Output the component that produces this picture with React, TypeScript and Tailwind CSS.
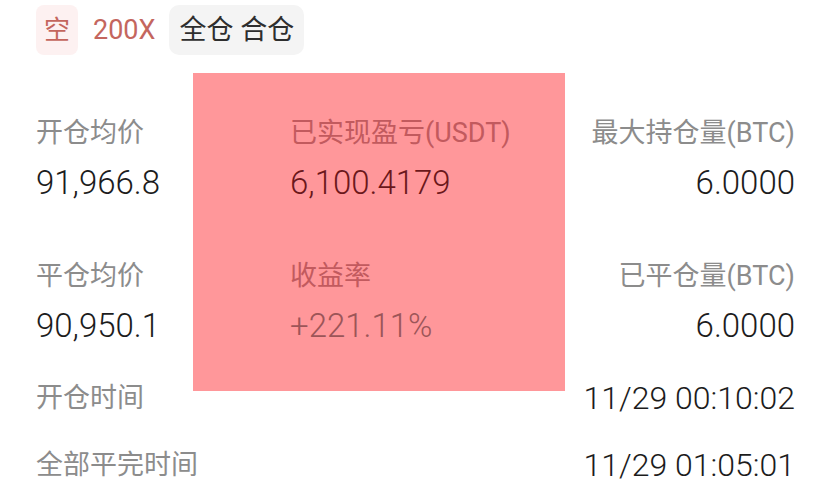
import React from 'react';

const num = { fontFamily: 'Roboto, "Noto Sans CJK SC", sans-serif' };
const cjk = { fontFamily: 'Roboto, "Noto Sans CJK SC", sans-serif' };

function Cell({
  label,
  value,
  align = 'left',
  labelClass = 'text-[#8c8c8c]',
  valueClass = 'text-[#1c1c1c]',
}: {
  label: string;
  value: string;
  align?: 'left' | 'right';
  labelClass?: string;
  valueClass?: string;
}) {
  return (
    <div className={align === 'right' ? 'flex flex-col items-end' : 'flex flex-col items-start'}>
      <div style={cjk} className={`h-[50px] leading-[50px] text-[27px] whitespace-nowrap ${labelClass}`}>
        {label}
      </div>
      <div style={num} className={`h-[50px] leading-[50px] text-[33px] font-light whitespace-nowrap ${valueClass}`}>
        {value}
      </div>
    </div>
  );
}

export default function App() {
  return (
    <div className="relative w-[829px] h-[500px] overflow-hidden bg-white pl-[36px] pr-[34px]">
      {/* highlight box behind the middle column */}
      <div className="absolute left-[193px] top-[73px] w-[372px] h-[318px] bg-[#ff979a]" />

      <div className="relative">
        {/* tags */}
        <div className="flex items-center h-[50px] mt-[5px]" style={cjk}>
          <span className="h-[50px] px-[8px] rounded-[8px] bg-[#fdf1f1] leading-[50px] text-[26px] text-[#c4665e]">空</span>
          <span className="ml-[15px] text-[27px] leading-[50px] text-[#c4665e]" style={num}>200X</span>
          <span className="ml-[14px] h-[50px] px-[10px] rounded-[10px] bg-[#f4f4f4] leading-[50px] text-[27px] text-[#2e2e2e]">
            全仓 合仓
          </span>
        </div>

        {/* stats */}
        <div className="grid grid-cols-[254px_1fr_auto] mt-[53px] gap-y-[43px]">
          <Cell label="开仓均价" value="91,966.8" />
          <Cell
            label="已实现盈亏(USDT)"
            value="6,100.4179"
            labelClass="text-[#c25a5e]"
            valueClass="text-[#6b171b]"
          />
          <Cell label="最大持仓量(BTC)" value="6.0000" align="right" />

          <Cell label="平仓均价" value="90,950.1" />
          <Cell
            label="收益率"
            value="+221.11%"
            labelClass="text-[#c25a5e]"
            valueClass="text-[#9c5558]"
          />
          <Cell label="已平仓量(BTC)" value="6.0000" align="right" />
        </div>

        <div className="mt-[22px] flex items-center justify-between h-[50px]">
          <span style={cjk} className="text-[27px] text-[#8c8c8c]">开仓时间</span>
          <span style={num} className="text-[32px] font-light text-[#1c1c1c]">11/29 00:10:02</span>
        </div>
        <div className="mt-[17px] flex items-center justify-between h-[50px]">
          <span style={cjk} className="text-[27px] text-[#8c8c8c]">全部平完时间</span>
          <span style={num} className="text-[32px] font-light text-[#1c1c1c]">11/29 01:05:01</span>
        </div>
      </div>
    </div>
  );
}
